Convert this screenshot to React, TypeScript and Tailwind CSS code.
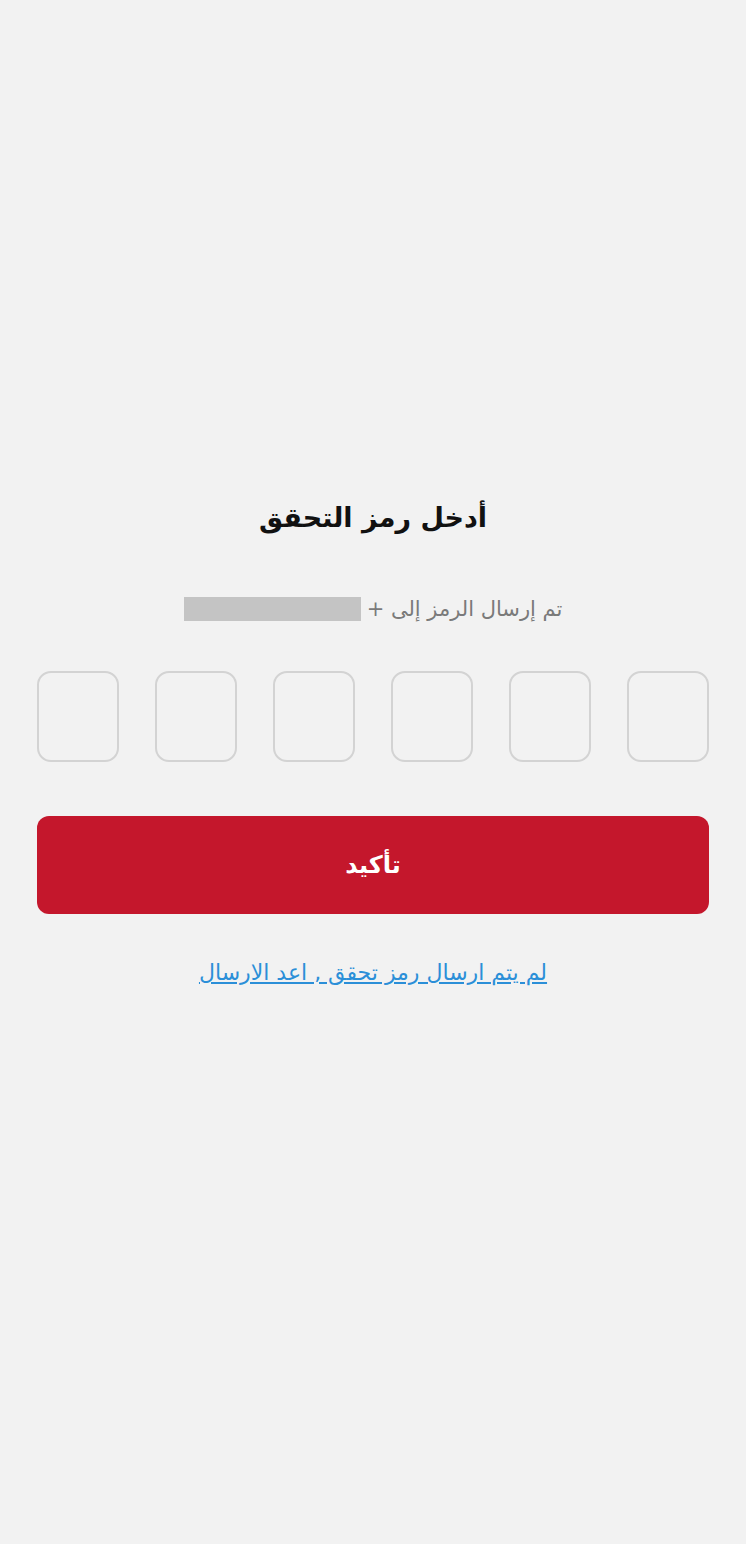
import React from 'react';

export default function App() {
  return (
    <div dir="rtl" className="min-h-[1544px] bg-[#f2f2f2] font-['DejaVu_Sans',sans-serif]">
      <div className="px-[37px] pt-[496px]">
        {/* Heading */}
        <h1 className="text-center text-[27px] leading-[44px] font-bold text-[#111]">أدخل رمز التحقق</h1>

        <div className="mt-[52px] flex items-center justify-center gap-[6px] text-[21px] leading-[34px] text-[#7a7a7a]">
          <span>تم إرسال الرمز إلى +</span>
          <span className="h-[24px] w-[177px] bg-[#c4c4c4]" />
        </div>

        {/* OTP boxes */}
        <div dir="ltr" className="mt-[45px] flex justify-between">
          {[0, 1, 2, 3, 4, 5].map((i) => (
            <div key={i} className="h-[91px] w-[82px] rounded-[14px] border-2 border-[#d3d3d3]" />
          ))}
        </div>

        <button className="mt-[54px] flex h-[98px] w-full items-center justify-center rounded-[12px] bg-[#c4172c] text-[24px] font-bold text-white">
          تأكيد
        </button>

        <div className="mt-[42px] text-center">
          <a href="#" className="text-[22px] leading-[34px] text-[#2b8fd8] underline">
            لم يتم ارسال رمز تحقق , اعد الارسال
          </a>
        </div>
      </div>
    </div>
  );
}
